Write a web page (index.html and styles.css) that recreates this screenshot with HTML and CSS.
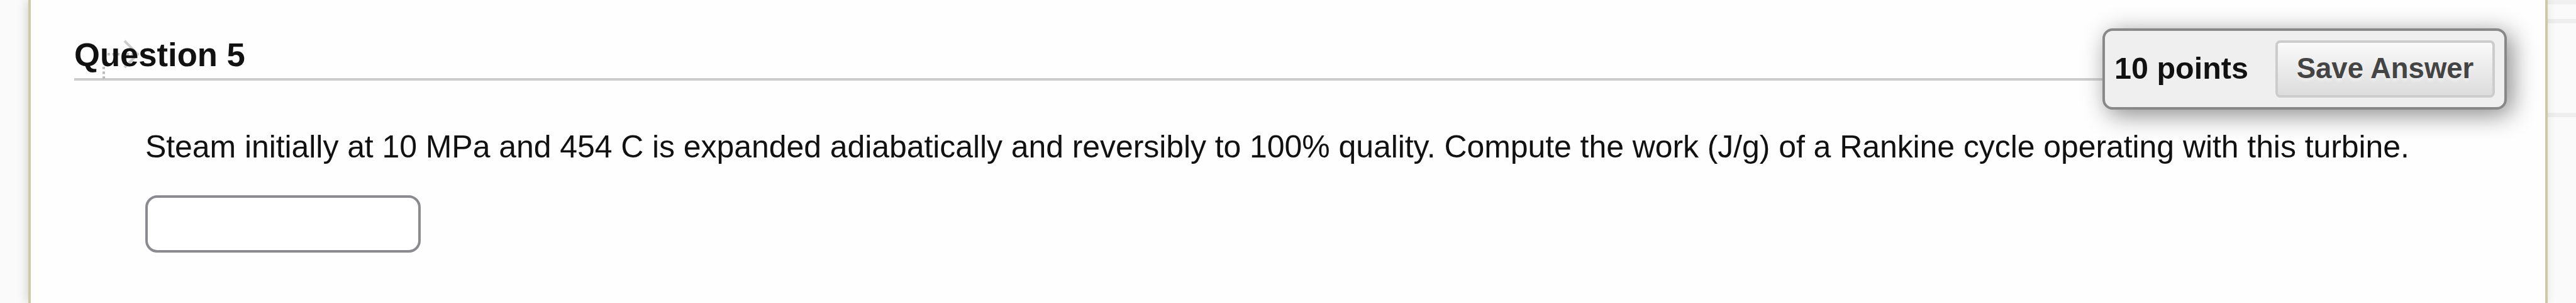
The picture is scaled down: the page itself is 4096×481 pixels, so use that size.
FILE: index.html
```html
<!DOCTYPE html>
<html lang="en">
<head>
  <meta charset="UTF-8">
  <title>Question 5</title>
  <link rel="stylesheet" href="styles.css">
</head>
<body>
  <div class="page">
    <main class="content">
      <header class="question-header">
        <svg class="drag-handle" width="96" height="80" viewBox="0 0 96 80">
          <path class="dots" d="M14 77V38M20 38H70" />
          <path class="arrow" d="M47 17L68 38L47 59" />
        </svg>
        <h3>Question 5</h3>
        <div class="points-box">
          <span class="points">10 points</span>
          <button type="button">Save Answer</button>
        </div>
      </header>
      <form class="question-body">
        <label for="answer">Steam initially at 10 MPa and 454 C is expanded adiabatically and reversibly to 100% quality. Compute the work (J/g) of a Rankine cycle operating with this turbine.</label>
        <input type="text" id="answer" name="answer">
      </form>
    </main>
    <aside class="side">
      <div class="side-row"></div>
      <div class="side-row tall"></div>
    </aside>
  </div>
</body>
</html>
```
FILE: styles.css
```css
* {
  box-sizing: border-box;
}
body {
  margin: 0;
  height: 481px;
  overflow: hidden;
  background-color: #fafafa;
  color: #111;
  font-family: "Liberation Sans", Arial, sans-serif;
}
.page {
  display: flex;
  height: 481px;
  padding-left: 45px;
}
.content {
  position: relative;
  z-index: 1;
  width: 4006px;
  padding-left: 69px;
  background-color: #fefefe;
  border: solid #cdc8a6;
  border-width: 0 4px;
  box-shadow: -3px 0 15px rgba(0, 0, 0, 0.15);
}
.question-header {
  position: relative;
  width: 3860px;
  height: 128px;
  padding-top: 56px;
  border-bottom: 4px solid #ccc;
}
h3 {
  position: relative;
  margin: 0;
  font-size: 52.6px;
  line-height: 61px;
}
.drag-handle {
  position: absolute;
  left: 33px;
  top: 48px;
  fill: none;
}
.dots {
  stroke: #bbb;
  stroke-width: 4;
  stroke-dasharray: 3.8 3.8;
}
.arrow {
  stroke: #ccc;
  stroke-width: 4;
}
.points-box {
  position: absolute;
  top: 45px;
  right: -8px;
  display: flex;
  align-items: center;
  justify-content: space-between;
  width: 643px;
  height: 129px;
  padding: 0 15px 0 15px;
  background-color: #efefef;
  border: 4px solid #888;
  border-radius: 16px;
  box-shadow: 8px 8px 38px #888;
}
.points {
  padding-bottom: 4px;
  font-size: 48.5px;
  font-weight: bold;
  line-height: 56px;
}
button {
  width: 349px;
  height: 91px;
  padding: 0 0 2px;
  font-family: inherit;
  font-size: 45.5px;
  font-weight: bold;
  color: #444;
  text-shadow: 0 4px 4px rgba(255, 255, 255, 0.4);
  background: linear-gradient(#fafafa, #dcdcdc);
  border: 4px solid #ccc;
  border-radius: 8px;
}
.question-body {
  padding: 76px 0 0 113px;
}
label {
  display: block;
  font-size: 50px;
  line-height: 58px;
  letter-spacing: -0.075px;
  white-space: nowrap;
}
input {
  display: block;
  width: 438px;
  height: 91px;
  margin-top: 48px;
  background-color: #fff;
  border: 4px solid #8b8a8f;
  border-radius: 19px;
}
.side {
  flex: 1;
  border-top: 7px solid #f0f0f0;
}
.side-row {
  height: 30px;
  border-bottom: 7px solid #eee;
}
.side-row.tall {
  height: 149px;
}
```
